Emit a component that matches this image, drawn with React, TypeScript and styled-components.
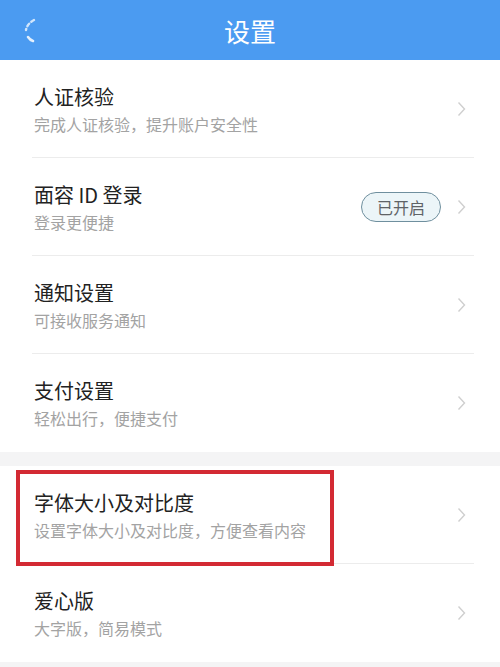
import React from "react";
import styled, { createGlobalStyle } from "styled-components";

const GlobalStyle = createGlobalStyle`
  body {
    margin: 0;
    background: #f4f4f5;
    font-family: "Noto Sans CJK SC", "Noto Sans", sans-serif;
  }
`;

const Page = styled.div`
  width: 500px;
  min-height: 667px;
  background: #f4f4f5;
`;

const Header = styled.div`
  height: 60px;
  background: #4b9bf1;
  display: flex;
  align-items: center;
  justify-content: center;
  position: relative;
`;

const HeaderTitle = styled.h1`
  margin: 0;
  font-size: 26px;
  font-weight: 400;
  color: #ffffff;
`;

const BackButton = styled.div`
  position: absolute;
  left: 22px;
  top: 16px;
  width: 16px;
  height: 28px;
  display: flex;
  align-items: center;
`;

const Group = styled.div`
  background: #ffffff;
  margin-bottom: 14px;
  position: relative;
`;

const Row = styled.div<{ $last?: boolean }>`
  height: 98px;
  box-sizing: border-box;
  padding: 23px 34px 0 34px;
  display: flex;
  align-items: flex-start;
  position: relative;

  &::after {
    content: "";
    display: ${(p) => (p.$last ? "none" : "block")};
    position: absolute;
    left: 32px;
    right: 26px;
    bottom: 0;
    height: 1px;
    background: #ececec;
  }
`;

const Texts = styled.div`
  flex: 1;
  display: flex;
  flex-direction: column;
`;

const Title = styled.div`
  font-size: 20px;
  line-height: 28px;
  color: #222222;
`;

const Subtitle = styled.div`
  font-size: 16px;
  line-height: 22px;
  margin-top: 2px;
  color: #a3a3a3;
`;

const Side = styled.div`
  align-self: stretch;
  margin-top: -23px;
  display: flex;
  align-items: center;
  gap: 16px;
`;

const Badge = styled.div`
  width: 80px;
  height: 30px;
  box-sizing: border-box;
  border: 1.5px solid #6f8f9e;
  border-radius: 15px;
  background: #ecf5f8;
  color: #5f6366;
  font-size: 16px;
  display: flex;
  align-items: center;
  justify-content: center;
`;

const Highlight = styled.div`
  position: absolute;
  left: 16px;
  top: 4px;
  width: 318px;
  height: 96px;
  box-sizing: border-box;
  border: 4px solid #d32a33;
  pointer-events: none;
`;

const Chevron = () => (
  <svg width="9" height="16" viewBox="0 0 9 16">
    <path d="M1.5 1.5 L7.5 8 L1.5 14.5" fill="none" stroke="#cfcfcf" strokeWidth="1.4" />
  </svg>
);

type Item = { title: string; sub: string; badge?: string };

const groupOne: Item[] = [
  { title: "人证核验", sub: "完成人证核验，提升账户安全性" },
  { title: "面容 ID 登录", sub: "登录更便捷", badge: "已开启" },
  { title: "通知设置", sub: "可接收服务通知" },
  { title: "支付设置", sub: "轻松出行，便捷支付" },
];

const groupTwo: Item[] = [
  { title: "字体大小及对比度", sub: "设置字体大小及对比度，方便查看内容" },
  { title: "爱心版", sub: "大字版，简易模式" },
];

const SettingRow = ({ item, last }: { item: Item; last?: boolean }) => (
  <Row $last={last}>
    <Texts>
      <Title>{item.title}</Title>
      <Subtitle>{item.sub}</Subtitle>
    </Texts>
    <Side>
      {item.badge && <Badge>{item.badge}</Badge>}
      <Chevron />
    </Side>
  </Row>
);

export default function App() {
  return (
    <Page>
      <GlobalStyle />
      <Header>
        <BackButton>
          <svg width="16" height="28" viewBox="0 0 16 28">
            <path d="M12 4 Q5 8 4 14" fill="none" stroke="rgba(255,255,255,0.75)" strokeWidth="2.4" strokeLinecap="round" strokeDasharray="3 3" />
            <path d="M6 21 Q8 24 11 25" fill="none" stroke="rgba(255,255,255,0.85)" strokeWidth="2.6" strokeLinecap="round" />
          </svg>
        </BackButton>
        <HeaderTitle>设置</HeaderTitle>
      </Header>
      <Group>
        {groupOne.map((item, i) => (
          <SettingRow key={item.title} item={item} last={i === groupOne.length - 1} />
        ))}
      </Group>
      <Group>
        {groupTwo.map((item, i) => (
          <SettingRow key={item.title} item={item} last={i === groupTwo.length - 1} />
        ))}
        <Highlight />
      </Group>
    </Page>
  );
}
